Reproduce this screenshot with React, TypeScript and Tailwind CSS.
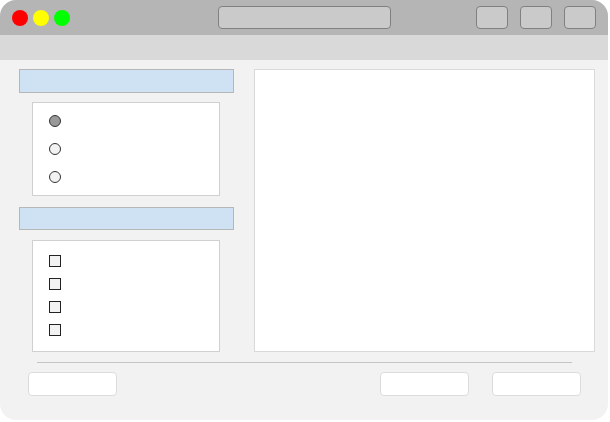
export default function App() {
  return (
    <div className="w-[610px] h-[422px] bg-white font-['Liberation_Sans',sans-serif]">
      <div className="w-[608px] h-[420px] rounded-[16px] overflow-hidden bg-[#f2f2f2] flex flex-col">
        {/* Title bar */}
        <div className="h-[35px] bg-[#b5b5b5] flex items-center pl-[12px] pr-[12px] shrink-0">
          <div className="flex gap-[5px]">
            <span className="w-[16px] h-[16px] rounded-full bg-[#ff0000]" />
            <span className="w-[16px] h-[16px] rounded-full bg-[#ffff00]" />
            <span className="w-[16px] h-[16px] rounded-full bg-[#00ff00]" />
          </div>
          <div className="ml-[148px] w-[173px] h-[23px] rounded-[4px] border border-[#808080] bg-[#cacaca]" />
          <div className="ml-auto flex gap-[12px]">
            <div className="w-[32px] h-[23px] rounded-[4px] border border-[#808080] bg-[#cacaca]" />
            <div className="w-[32px] h-[23px] rounded-[4px] border border-[#808080] bg-[#cacaca]" />
            <div className="w-[32px] h-[23px] rounded-[4px] border border-[#808080] bg-[#cacaca]" />
          </div>
        </div>

        {/* Toolbar */}
        <div className="h-[25px] bg-[#d9d9d9] shrink-0" />

        {/* Content */}
        <div className="flex gap-[20px] pl-[19px] pr-[13px] pt-[9px]">
          <div className="w-[215px] flex flex-col">
            <div className="h-[24px] bg-[#cfe2f3] border border-[#b7b7b7]" />
            <div className="ml-[13px] mt-[9px] w-[188px] h-[94px] bg-white border border-[#d0d0d0] pl-[16px] pt-[12px] flex flex-col gap-[16px]">
              <span className="w-[12px] h-[12px] rounded-full bg-[#999999] border border-[#333333]" />
              <span className="w-[12px] h-[12px] rounded-full bg-[#f2f2f2] border border-[#333333]" />
              <span className="w-[12px] h-[12px] rounded-full bg-[#f2f2f2] border border-[#333333]" />
            </div>
            <div className="mt-[11px] h-[23px] bg-[#cfe2f3] border border-[#b7b7b7]" />
            <div className="ml-[13px] mt-[10px] w-[188px] h-[112px] bg-white border border-[#d0d0d0] pl-[16px] pt-[14px] flex flex-col gap-[11px]">
              <span className="w-[12px] h-[12px] bg-[#f2f2f2] border border-[#222222]" />
              <span className="w-[12px] h-[12px] bg-[#f2f2f2] border border-[#222222]" />
              <span className="w-[12px] h-[12px] bg-[#f2f2f2] border border-[#222222]" />
              <span className="w-[12px] h-[12px] bg-[#f2f2f2] border border-[#222222]" />
            </div>
          </div>
          <div className="w-[341px] h-[283px] bg-white border border-[#d9d9d9]" />
        </div>

        {/* Separator */}
        <div className="ml-[37px] mt-[10px] w-[535px] h-px bg-[#c4c4c4]" />

        {/* Footer buttons */}
        <div className="flex pl-[28px] pr-[27px] mt-[9px]">
          <div className="w-[89px] h-[24px] rounded-[4px] bg-white border border-[#dcdcdc]" />
          <div className="ml-auto flex gap-[23px]">
            <div className="w-[89px] h-[24px] rounded-[4px] bg-white border border-[#dcdcdc]" />
            <div className="w-[89px] h-[24px] rounded-[4px] bg-white border border-[#dcdcdc]" />
          </div>
        </div>
      </div>
    </div>
  );
}
